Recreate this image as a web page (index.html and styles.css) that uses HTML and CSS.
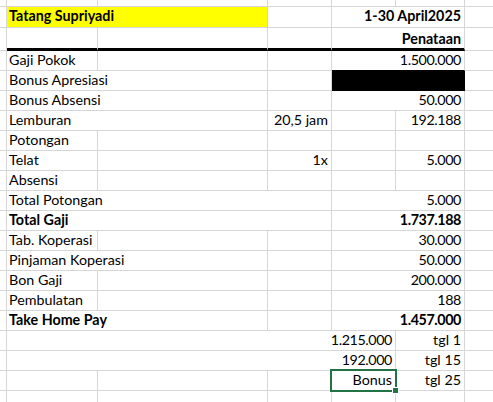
FILE: index.html
```html
<!DOCTYPE html>
<html>
<head>
<meta charset="utf-8">
<link rel="stylesheet" href="styles.css">
</head>
<body>
<div class="sheet">
  <div class="row h-top">
    <div class="c rb"></div><div class="c rb"></div><div class="c rb"></div><div class="c rb"></div><div class="c rb"></div><div class="c rb"></div><div class="c"></div>
  </div>
  <div class="row h-name">
    <div class="c rb"></div>
    <div class="c yellow span2 rb b">Tatang Supriyadi</div>
    <div class="c rb"></div>
    <div class="c"></div>
    <div class="c rb right b">1-30 April2025</div>
    <div class="c"></div>
  </div>
  <div class="row h-head">
    <div class="c rb"></div>
    <div class="c rb thick"></div>
    <div class="c rb thick"></div>
    <div class="c rb thick"></div>
    <div class="c thick"></div>
    <div class="c rb thick right b">Penataan</div>
    <div class="c"></div>
  </div>
  <div class="row">
    <div class="c rb"></div><div class="c rb">Gaji Pokok</div><div class="c rb"></div><div class="c rb"></div>
    <div class="c blackbot"></div><div class="c rb right num blackbot">1.500.000</div><div class="c"></div>
  </div>
  <div class="row">
    <div class="c rb"></div><div class="c">Bonus Apresiasi</div><div class="c rb"></div><div class="c rb"></div>
    <div class="c black"></div><div class="c rb black"></div><div class="c"></div>
  </div>
  <div class="row">
    <div class="c rb"></div><div class="c">Bonus Absensi</div><div class="c rb"></div><div class="c rb"></div>
    <div class="c"></div><div class="c rb right num">50.000</div><div class="c"></div>
  </div>
  <div class="row">
    <div class="c rb"></div><div class="c">Lemburan</div><div class="c rb"></div><div class="c rb right">20,5 jam</div>
    <div class="c rb"></div><div class="c rb right num">192.188</div><div class="c"></div>
  </div>
  <div class="row">
    <div class="c rb"></div><div class="c rb">Potongan</div><div class="c rb"></div><div class="c rb"></div>
    <div class="c rb"></div><div class="c rb"></div><div class="c"></div>
  </div>
  <div class="row">
    <div class="c rb"></div><div class="c rb">Telat</div><div class="c rb"></div><div class="c rb right">1x</div>
    <div class="c rb"></div><div class="c rb right num">5.000</div><div class="c"></div>
  </div>
  <div class="row">
    <div class="c rb"></div><div class="c rb">Absensi</div><div class="c rb"></div><div class="c rb"></div>
    <div class="c rb"></div><div class="c rb"></div><div class="c"></div>
  </div>
  <div class="row">
    <div class="c rb"></div><div class="c">Total Potongan</div><div class="c"></div><div class="c rb"></div>
    <div class="c"></div><div class="c rb right num">5.000</div><div class="c"></div>
  </div>
  <div class="row">
    <div class="c rb"></div><div class="c b">Total Gaji</div><div class="c"></div><div class="c rb"></div>
    <div class="c"></div><div class="c rb right num b">1.737.188</div><div class="c"></div>
  </div>
  <div class="row">
    <div class="c rb"></div><div class="c rb">Tab. Koperasi</div><div class="c rb"></div><div class="c rb"></div>
    <div class="c"></div><div class="c rb right num">30.000</div><div class="c"></div>
  </div>
  <div class="row">
    <div class="c rb"></div><div class="c">Pinjaman Koperasi</div><div class="c rb"></div><div class="c rb"></div>
    <div class="c"></div><div class="c rb right num">50.000</div><div class="c"></div>
  </div>
  <div class="row">
    <div class="c rb"></div><div class="c rb">Bon Gaji</div><div class="c rb"></div><div class="c rb"></div>
    <div class="c"></div><div class="c rb right num">200.000</div><div class="c"></div>
  </div>
  <div class="row">
    <div class="c rb"></div><div class="c rb">Pembulatan</div><div class="c rb"></div><div class="c rb"></div>
    <div class="c"></div><div class="c rb right num">188</div><div class="c"></div>
  </div>
  <div class="row">
    <div class="c rb"></div><div class="c b">Take Home Pay</div><div class="c rb"></div><div class="c rb"></div>
    <div class="c"></div><div class="c rb right num b">1.457.000</div><div class="c"></div>
  </div>
  <div class="row">
    <div class="c rb"></div><div class="c"></div><div class="c"></div><div class="c"></div>
    <div class="c rb right num">1.215.000</div><div class="c rb right">tgl 1</div><div class="c"></div>
  </div>
  <div class="row">
    <div class="c rb"></div><div class="c"></div><div class="c"></div><div class="c"></div>
    <div class="c rb right num">192.000</div><div class="c rb right">tgl 15</div><div class="c"></div>
  </div>
  <div class="row">
    <div class="c rb"></div><div class="c rb"></div><div class="c rb"></div><div class="c rb"></div>
    <div class="c rb right">Bonus</div><div class="c rb right">tgl 25</div><div class="c"></div>
  </div>
  <div class="row h-last">
    <div class="c rb"></div><div class="c rb"></div><div class="c rb"></div><div class="c rb"></div>
    <div class="c rb"></div><div class="c rb"></div><div class="c"></div>
  </div>
  <div class="selection"><span class="handle"></span></div>
</div>
</body>
</html>
```
FILE: styles.css
```css
html, body {
  margin: 0;
  padding: 0;
  background: #ffffff;
}
.sheet {
  position: relative;
  width: 493px;
  height: 402px;
  overflow: hidden;
  font-family: Lato, "Liberation Sans", sans-serif;
  font-size: 14.3px;
  color: #000000;
}
.row {
  display: grid;
  grid-template-columns: 7px 91px 170px 64px 64px 69px 28px;
  height: 20px;
}
.row.h-top { height: 7px; }
.row.h-name { height: 21px; }
.row.h-head { height: 23px; }
.row.h-last { height: 12px; }
.c {
  box-sizing: border-box;
  border-bottom: 1px solid #d6d6d6;
  display: flex;
  align-items: flex-end;
  padding: 0 2px 2px 2px;
  line-height: 16px;
  white-space: nowrap;
  min-width: 0;
}
.h-name .c { padding-bottom: 3px; }
.h-head .c { padding-bottom: 1px; }
.rb { border-right: 1px solid #d6d6d6; }
.right { justify-content: flex-end; padding-right: 3px; }
.b { font-weight: 700; }
.num { letter-spacing: -0.4px; }
.span2 { grid-column: span 2; }
.yellow { background: #ffff00; }
.thick { border-bottom: 3px solid #000000; }
.black { background: #000000; border-bottom-color: #000000; }
.black.rb { border-right-color: #000000; }
.blackbot { border-bottom-color: #000000; }
.selection {
  position: absolute;
  left: 330px;
  top: 369px;
  width: 67px;
  height: 23px;
  box-sizing: border-box;
  border: 2px solid #217346;
}
.handle {
  position: absolute;
  right: -4px;
  bottom: -4px;
  width: 5px;
  height: 5px;
  background: #217346;
  border: 1px solid #ffffff;
}
```
